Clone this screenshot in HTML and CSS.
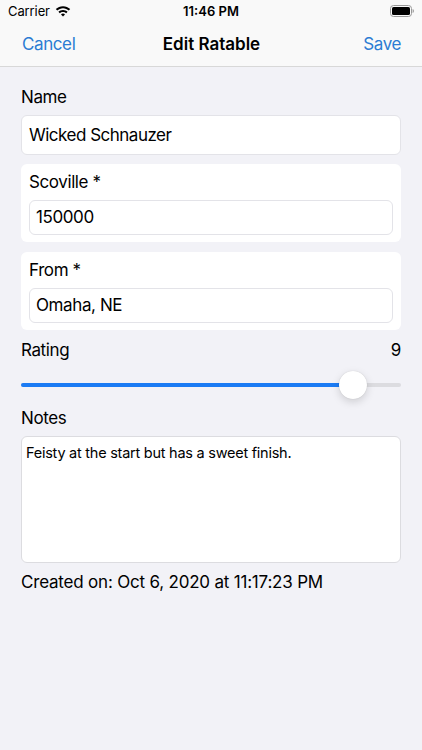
FILE: index.html
```html
<!DOCTYPE html>
<html>
<head>
<meta charset="utf-8">
<link rel="stylesheet" href="styles.css">
</head>
<body>
<div class="screen">
  <div class="status">
    <div class="status-left">
      <span class="carrier">Carrier</span>
      <svg class="wifi" width="16" height="12" viewBox="0 0 16 12">
        <path d="M8 1.2C5.2 1.2 2.7 2.3 0.8 4.1L2.2 5.6C3.7 4.1 5.8 3.2 8 3.2S12.3 4.1 13.8 5.6L15.2 4.1C13.3 2.3 10.8 1.2 8 1.2Z" fill="#000"/>
        <path d="M8 4.9C6.2 4.9 4.6 5.6 3.4 6.8L4.8 8.3C5.6 7.5 6.8 7 8 7S10.4 7.5 11.2 8.3L12.6 6.8C11.4 5.6 9.8 4.9 8 4.9Z" fill="#000"/>
        <path d="M8 8.6C7.2 8.6 6.5 8.9 6 9.4L8 11.5L10 9.4C9.5 8.9 8.8 8.6 8 8.6Z" fill="#000"/>
      </svg>
    </div>
    <div class="time">11:46 PM</div>
    <div class="status-right">
      <svg width="24" height="12" viewBox="0 0 24 12">
        <rect x="0.5" y="0.5" width="21" height="11" rx="3" fill="none" stroke="#999" stroke-width="1"/>
        <rect x="2" y="2" width="18" height="8" rx="1.6" fill="#000"/>
        <path d="M22.6 4v4c0.8-0.3 1.3-1.1 1.3-2s-0.5-1.7-1.3-2z" fill="#999"/>
      </svg>
    </div>
  </div>
  <div class="navbar">
    <span class="nav-btn nav-left">Cancel</span>
    <span class="nav-title">Edit Ratable</span>
    <span class="nav-btn nav-right">Save</span>
  </div>
  <div class="content">
    <div class="label">Name</div>
    <div class="field">Wicked Schnauzer</div>
    <div class="card">
      <div class="card-label">Scoville *</div>
      <div class="inner-field">150000</div>
    </div>
    <div class="card">
      <div class="card-label">From *</div>
      <div class="inner-field">Omaha, NE</div>
    </div>
    <div class="rating-row">
      <span>Rating</span>
      <span>9</span>
    </div>
    <div class="slider">
      <div class="track">
        <div class="fill" style="width: 87.4%"></div>
        <div class="thumb" style="left: 87.4%"></div>
      </div>
    </div>
    <div class="label notes-label">Notes</div>
    <div class="notes">Feisty at the start but has a sweet finish.</div>
    <div class="created">Created on: Oct 6, 2020 at 11:17:23 PM</div>
  </div>
</div>
</body>
</html>
```
FILE: styles.css
```css
html, body {
  margin: 0;
  padding: 0;
}
body {
  width: 422px;
  height: 750px;
  background: #f2f2f7;
  font-family: Inter, "Noto Sans", sans-serif;
  color: #000;
  overflow: hidden;
  letter-spacing: -0.4px;
}
.screen {
  display: flex;
  flex-direction: column;
}
.status {
  height: 22px;
  display: flex;
  align-items: center;
  justify-content: space-between;
  padding: 0 8px;
  background: #f9f9f9;
  position: relative;
}
.status-left {
  display: flex;
  align-items: center;
  gap: 5px;
  font-size: 13px;
  letter-spacing: -0.1px;
}
.time {
  position: absolute;
  left: 0;
  right: 0;
  text-align: center;
  font-size: 13px;
  font-weight: 600;
  letter-spacing: 0;
}
.status-right {
  display: flex;
  align-items: center;
}
.navbar {
  height: 44px;
  background: #f9f9f9;
  border-bottom: 1px solid #d8d8d8;
  display: grid;
  grid-template-columns: 1fr auto 1fr;
  align-items: center;
  padding: 0 21px 0 22px;
}
.nav-btn {
  color: #2b7cd3;
  font-size: 17px;
}
.nav-right {
  justify-self: end;
}
.nav-title {
  font-size: 17px;
  font-weight: 600;
  letter-spacing: 0;
}
.content {
  padding: 0 21px;
  display: flex;
  flex-direction: column;
}
.label {
  font-size: 17px;
  margin-top: 19px;
  height: 22px;
  line-height: 22px;
}
.field {
  margin-top: 7px;
  background: #fff;
  border: 1px solid #e3e3e8;
  border-radius: 6px;
  height: 38px;
  line-height: 38px;
  padding: 0 7px;
  font-size: 17px;
  letter-spacing: -0.5px;
}
.card {
  margin-top: 9px;
  background: #fff;
  border-radius: 6px;
  padding: 7px 8px 7px 8px;
  display: flex;
  flex-direction: column;
}
.card + .card {
  margin-top: 10px;
}
.card-label {
  font-size: 17px;
  height: 22px;
  line-height: 22px;
}
.inner-field {
  margin-top: 7px;
  border: 1px solid #e3e3e8;
  border-radius: 6px;
  height: 33px;
  line-height: 33px;
  padding: 0 6px;
  font-size: 17px;
}
.rating-row {
  display: flex;
  justify-content: space-between;
  font-size: 17px;
  height: 22px;
  line-height: 22px;
  margin-top: 9px;
}
.slider {
  height: 30px;
  display: flex;
  align-items: center;
  margin-top: 9px;
}
.track {
  position: relative;
  width: 100%;
  height: 4px;
  border-radius: 2px;
  background: #dcdce0;
}
.fill {
  height: 100%;
  border-radius: 2px;
  background: #1b7bf4;
}
.thumb {
  position: absolute;
  top: 50%;
  width: 28px;
  height: 28px;
  margin-left: -14px;
  margin-top: -14px;
  border-radius: 50%;
  background: #fff;
  box-shadow: 0 3px 8px rgba(0,0,0,0.15), 0 0 1px rgba(0,0,0,0.18);
}
.notes-label {
  margin-top: 7px;
}
.notes {
  margin-top: 7px;
  height: 127px;
  background: #fff;
  border: 1px solid #dcdce0;
  border-radius: 6px;
  box-sizing: border-box;
  padding: 7px 4px;
  font-size: 14.5px;
  line-height: 18px;
  letter-spacing: -0.25px;
}
.created {
  margin-top: 8px;
  font-size: 17px;
  height: 22px;
  line-height: 22px;
  letter-spacing: -0.2px;
}
```
